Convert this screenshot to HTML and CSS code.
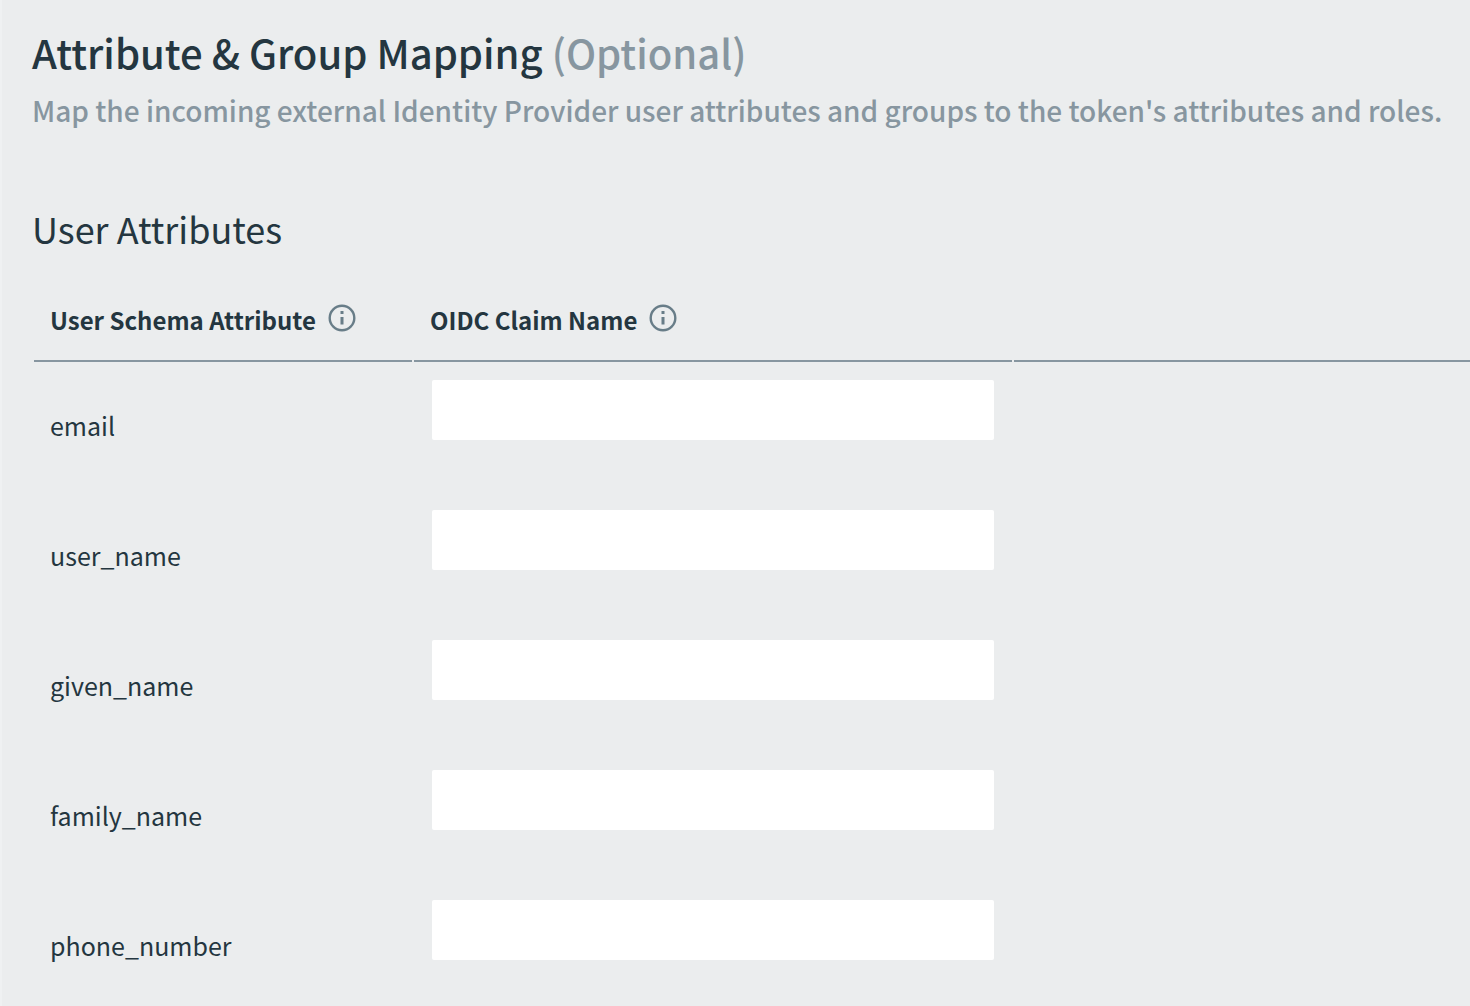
FILE: index.html
```html
<!DOCTYPE html>
<html lang="en">
<head>
<meta charset="utf-8">
<meta name="viewport" content="width=device-width, initial-scale=1">
<title>Attribute &amp; Group Mapping</title>
<link rel="stylesheet" href="styles.css">
</head>
<body>
<main class="mapping">
  <header class="intro">
    <h1 class="title">Attribute &amp; Group Mapping <span class="optional">(Optional)</span></h1>
    <p class="description">Map the incoming external Identity Provider user attributes and groups to the token's attributes and roles.</p>
  </header>
  <section class="attributes">
    <h2 class="section-title">User Attributes</h2>
    <table class="attribute-table">
      <thead>
        <tr>
          <th class="col-schema" scope="col"><span class="heading">User Schema Attribute
            <svg class="info" viewBox="0 0 28 28" aria-hidden="true"><circle class="ring" cx="14" cy="14" r="12.3"/><path d="M12.5 7h3v3h-3zM12.5 13h3v7.4h-3z"/></svg></span></th>
          <th class="col-claim" scope="col"><span class="heading">OIDC Claim Name
            <svg class="info" viewBox="0 0 28 28" aria-hidden="true"><circle class="ring" cx="14" cy="14" r="12.3"/><path d="M12.5 7h3v3h-3zM12.5 13h3v7.4h-3z"/></svg></span></th>
          <td class="col-rest"></td>
        </tr>
      </thead>
      <tbody>
        <tr><td class="name"><label for="email">email</label></td><td class="field"><input class="claim" id="email" type="text"></td><td></td></tr>
        <tr><td class="name"><label for="user_name">user_name</label></td><td class="field"><input class="claim" id="user_name" type="text"></td><td></td></tr>
        <tr><td class="name"><label for="given_name">given_name</label></td><td class="field"><input class="claim" id="given_name" type="text"></td><td></td></tr>
        <tr><td class="name"><label for="family_name">family_name</label></td><td class="field"><input class="claim" id="family_name" type="text"></td><td></td></tr>
        <tr><td class="name"><label for="phone_number">phone_number</label></td><td class="field"><input class="claim" id="phone_number" type="text"></td><td></td></tr>
      </tbody>
    </table>
  </section>
</main>
</body>
</html>
```
FILE: styles.css
```css
* {
  box-sizing: border-box;
}

body {
  margin: 0;
  background: #ebedee;
  color: #243640;
  font-family: "Noto Sans CJK SC", "Noto Sans", sans-serif;
  font-size: 25px;
  line-height: 32px;
}

.mapping {
  overflow-x: clip;
  padding: 24px 0 0 30px;
  border-left: 2px solid #eff1f2;
}

.title,
.section-title,
.description {
  margin: 0;
  font-weight: 500;
}

.title {
  font-size: 40px;
  line-height: 56px;
}

.optional,
.description {
  color: #8796a0;
}

.description {
  padding-top: 8px;
  font-size: 28px;
  line-height: 44px;
}

.attributes {
  padding-top: 68px;
}

.section-title {
  font-size: 36px;
  font-weight: 400;
  line-height: 56px;
}

.attribute-table {
  width: calc(100% + 2px);
  margin-top: 32px;
  border-spacing: 2px 0;
  table-layout: fixed;
}

.attribute-table th,
.attribute-table td {
  padding: 0 16px;
  text-align: left;
}

.attribute-table thead th,
.attribute-table thead td {
  height: 74px;
  padding-bottom: 8px;
  border-bottom: 2px solid #8796a0;
}

.attribute-table .col-schema {
  width: 378px;
}

.attribute-table .col-claim {
  width: 598px;
}

.heading {
  display: flex;
  align-items: flex-start;
  gap: 12px;
  font-size: 24px;
  font-weight: 700;
}

.info {
  width: 28px;
  height: 28px;
  fill: #687d88;
}

.info .ring {
  fill: none;
  stroke: #687d88;
  stroke-width: 2.4;
}

.attribute-table tbody td {
  height: 130px;
}

.attribute-table .name {
  padding-bottom: 4px;
}

.attribute-table .field {
  padding: 18px;
  vertical-align: top;
}

.claim {
  display: block;
  width: 100%;
  height: 60px;
  padding: 0 16px;
  border: 0;
  border-radius: 2px;
  background: #fff;
  color: inherit;
  font: inherit;
}
```
